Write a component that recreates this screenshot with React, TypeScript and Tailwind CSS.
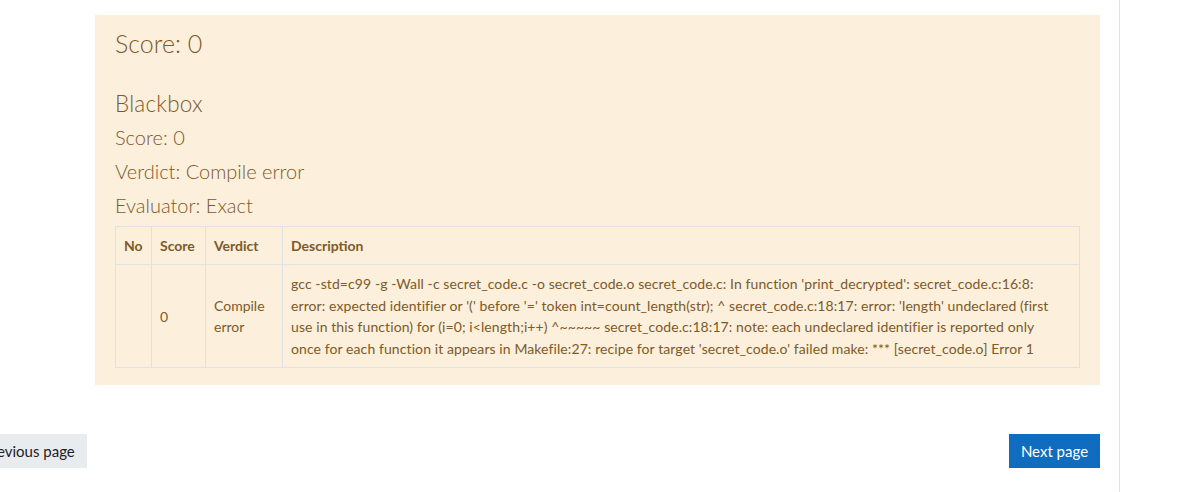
const descriptionLines = [
  "gcc -std=c99 -g -Wall -c secret_code.c -o secret_code.o secret_code.c: In function 'print_decrypted': secret_code.c:16:8:",
  "error: expected identifier or '(' before '=' token int=count_length(str); ^ secret_code.c:18:17: error: 'length' undeclared (first",
  "use in this function) for (i=0; i<length;i++) ^~~~~~ secret_code.c:18:17: note: each undeclared identifier is reported only",
  "once for each function it appears in Makefile:27: recipe for target 'secret_code.o' failed make: *** [secret_code.o] Error 1",
]

export default function App() {
  return (
    <div
      className="w-[1200px] h-[492px] bg-white overflow-hidden flex text-[#7d5a29]"
      style={{ fontFamily: 'Lato, "Open Sans", sans-serif' }}
    >
      <div className="w-[1120px] shrink-0 h-full border-r border-[#dee2e6] flex flex-col">
        {/* result box */}
        <div className="ml-[95px] mt-[15px] w-[1005px] h-[370px] bg-[#fcefdc] px-5 pt-[13px]">
          <h3 className="text-[25px] leading-[30px] font-light">Score: 0</h3>
          <h4 className="mt-[31.5px] text-[22.5px] leading-[27px] font-light tracking-[0.2px]">Blackbox</h4>
          <div className="mt-[3.8px] text-[20px] leading-[34px] font-light">
            <p>Score: 0</p>
            <p>Verdict: Compile error</p>
            <p>Evaluator: Exact</p>
          </div>
          <table className="mt-[3.7px] w-[965px] table-fixed border-collapse text-[14px] leading-[21.5px]">
            <thead>
              <tr>
                <th className="w-[36px] border border-[#dee2e6] px-2 py-2 text-left font-bold">No</th>
                <th className="w-[54px] border border-[#dee2e6] px-2 py-2 text-left font-bold">Score</th>
                <th className="w-[77px] border border-[#dee2e6] px-2 py-2 text-left font-bold">Verdict</th>
                <th className="border border-[#dee2e6] px-2 py-2 text-left font-bold">Description</th>
              </tr>
            </thead>
            <tbody>
              <tr>
                <td className="border border-[#dee2e6] px-2 py-2"></td>
                <td className="border border-[#dee2e6] px-2 py-2 align-middle">0</td>
                <td className="border border-[#dee2e6] px-2 py-2 align-middle">
                  Compile
                  <br />
                  error
                </td>
                <td className="border border-[#dee2e6] px-2 py-2 tracking-[0.09px]">
                  {descriptionLines.map((line) => (
                    <div key={line} className="whitespace-nowrap">
                      {line}
                    </div>
                  ))}
                </td>
              </tr>
            </tbody>
          </table>
        </div>

        {/* page navigation */}
        <div className="mt-[49px] flex items-center justify-between w-[1100px]">
          <button className="-ml-[29px] h-[34px] px-3 bg-[#e9ecef] text-[#1d2125] text-[15px]">
            Previous page
          </button>
          <button className="h-[34px] w-[91px] bg-[#0f6cbf] text-white text-[15px]">Next page</button>
        </div>
      </div>
    </div>
  )
}
